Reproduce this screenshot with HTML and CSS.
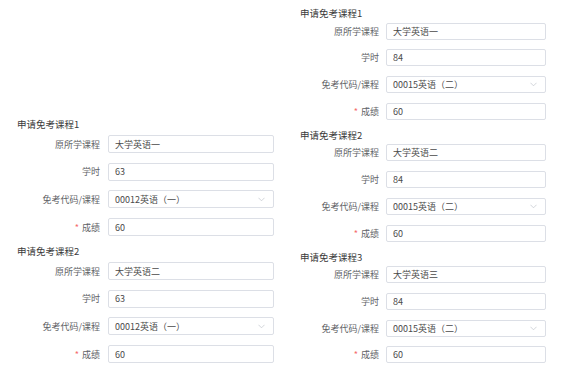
FILE: index.html
```html
<!DOCTYPE html>
<html lang="zh-CN">
<head>
  <meta charset="UTF-8">
  <title>申请免考课程</title>
  <link rel="stylesheet" href="styles.css">
</head>
<body>

<div class="page">

  <!-- 左侧 -->
  <div class="col col-left">
    <div class="course">
      <div class="course-title">申请免考课程1</div>
      <div class="form-item"><label>原所学课程</label><input class="field" value="大学英语一"></div>
      <div class="form-item"><label>学时</label><input class="field" value="63"></div>
      <div class="form-item"><label>免考代码/课程</label>
        <div class="field select"><span>00012英语（一）</span><svg class="arrow" viewBox="0 0 8 5"><path d="M0.5 0.5 L4 4 L7.5 0.5" /></svg></div>
      </div>
      <div class="form-item"><label><i>*</i>成绩</label><input class="field" value="60"></div>
    </div>
    <div class="course">
      <div class="course-title">申请免考课程2</div>
      <div class="form-item"><label>原所学课程</label><input class="field" value="大学英语二"></div>
      <div class="form-item"><label>学时</label><input class="field" value="63"></div>
      <div class="form-item"><label>免考代码/课程</label>
        <div class="field select"><span>00012英语（一）</span><svg class="arrow" viewBox="0 0 8 5"><path d="M0.5 0.5 L4 4 L7.5 0.5" /></svg></div>
      </div>
      <div class="form-item"><label><i>*</i>成绩</label><input class="field" value="60"></div>
    </div>
  </div>

  <!-- 右侧 -->
  <div class="col col-right">
    <div class="course">
      <div class="course-title">申请免考课程1</div>
      <div class="form-item"><label>原所学课程</label><input class="field" value="大学英语一"></div>
      <div class="form-item"><label>学时</label><input class="field" value="84"></div>
      <div class="form-item"><label>免考代码/课程</label>
        <div class="field select"><span>00015英语（二）</span><svg class="arrow" viewBox="0 0 8 5"><path d="M0.5 0.5 L4 4 L7.5 0.5" /></svg></div>
      </div>
      <div class="form-item"><label><i>*</i>成绩</label><input class="field" value="60"></div>
    </div>
    <div class="course">
      <div class="course-title">申请免考课程2</div>
      <div class="form-item"><label>原所学课程</label><input class="field" value="大学英语二"></div>
      <div class="form-item"><label>学时</label><input class="field" value="84"></div>
      <div class="form-item"><label>免考代码/课程</label>
        <div class="field select"><span>00015英语（二）</span><svg class="arrow" viewBox="0 0 8 5"><path d="M0.5 0.5 L4 4 L7.5 0.5" /></svg></div>
      </div>
      <div class="form-item"><label><i>*</i>成绩</label><input class="field" value="60"></div>
    </div>
    <div class="course">
      <div class="course-title">申请免考课程3</div>
      <div class="form-item"><label>原所学课程</label><input class="field" value="大学英语三"></div>
      <div class="form-item"><label>学时</label><input class="field" value="84"></div>
      <div class="form-item"><label>免考代码/课程</label>
        <div class="field select"><span>00015英语（二）</span><svg class="arrow" viewBox="0 0 8 5"><path d="M0.5 0.5 L4 4 L7.5 0.5" /></svg></div>
      </div>
      <div class="form-item"><label><i>*</i>成绩</label><input class="field" value="60"></div>
    </div>
  </div>

</div>

</body>
</html>
```

FILE: styles.css
```css
body {
  margin: 0;
  background: #fff;
  font-family: "Noto Sans CJK SC", "Noto Sans", sans-serif;
  color: #606266;
}
.page {
  display: flex;
}
.col-left {
  width: 296px;
  padding-top: 117px;
  padding-left: 17px;
  box-sizing: border-box;
}
.col-right {
  padding-top: 6px;
  padding-left: 4px;
}
.course {
  display: flex;
  flex-direction: column;
}
.course-title {
  font-size: 9.5px;
  line-height: 14px;
  height: 14px;
  color: #3a3a3a;
  margin-bottom: 4px;
}
.form-item {
  display: flex;
  align-items: center;
  margin-bottom: 9.7px;
}
.form-item label {
  width: 91px;
  padding-right: 8px;
  box-sizing: border-box;
  text-align: right;
  font-size: 9px;
  color: #606266;
}
.form-item label i {
  font-style: normal;
  color: #f56c6c;
  margin-right: 3px;
}
.field {
  width: 166px;
  height: 18px;
  box-sizing: border-box;
  border: 1px solid #dcdfe6;
  border-radius: 2px;
  padding: 0 6px;
  font-family: inherit;
  font-size: 9px;
  color: #4a4a4a;
  background: #fff;
  outline: none;
  margin: 0;
}
.select {
  display: flex;
  align-items: center;
  justify-content: space-between;
}
.arrow {
  width: 7px;
  height: 5px;
  margin-right: 2px;
}
.arrow path {
  fill: none;
  stroke: #c0c4cc;
  stroke-width: 0.8;
}
.course .form-item:last-child {
  margin-bottom: 8px;
}

/* 右侧稍小 */
.col-right .course-title {
  margin-bottom: 2.7px;
}
.col-right .form-item label {
  width: 86px;
  padding-right: 7px;
}
.col-right .field {
  width: 160px;
  height: 17px;
}
```
